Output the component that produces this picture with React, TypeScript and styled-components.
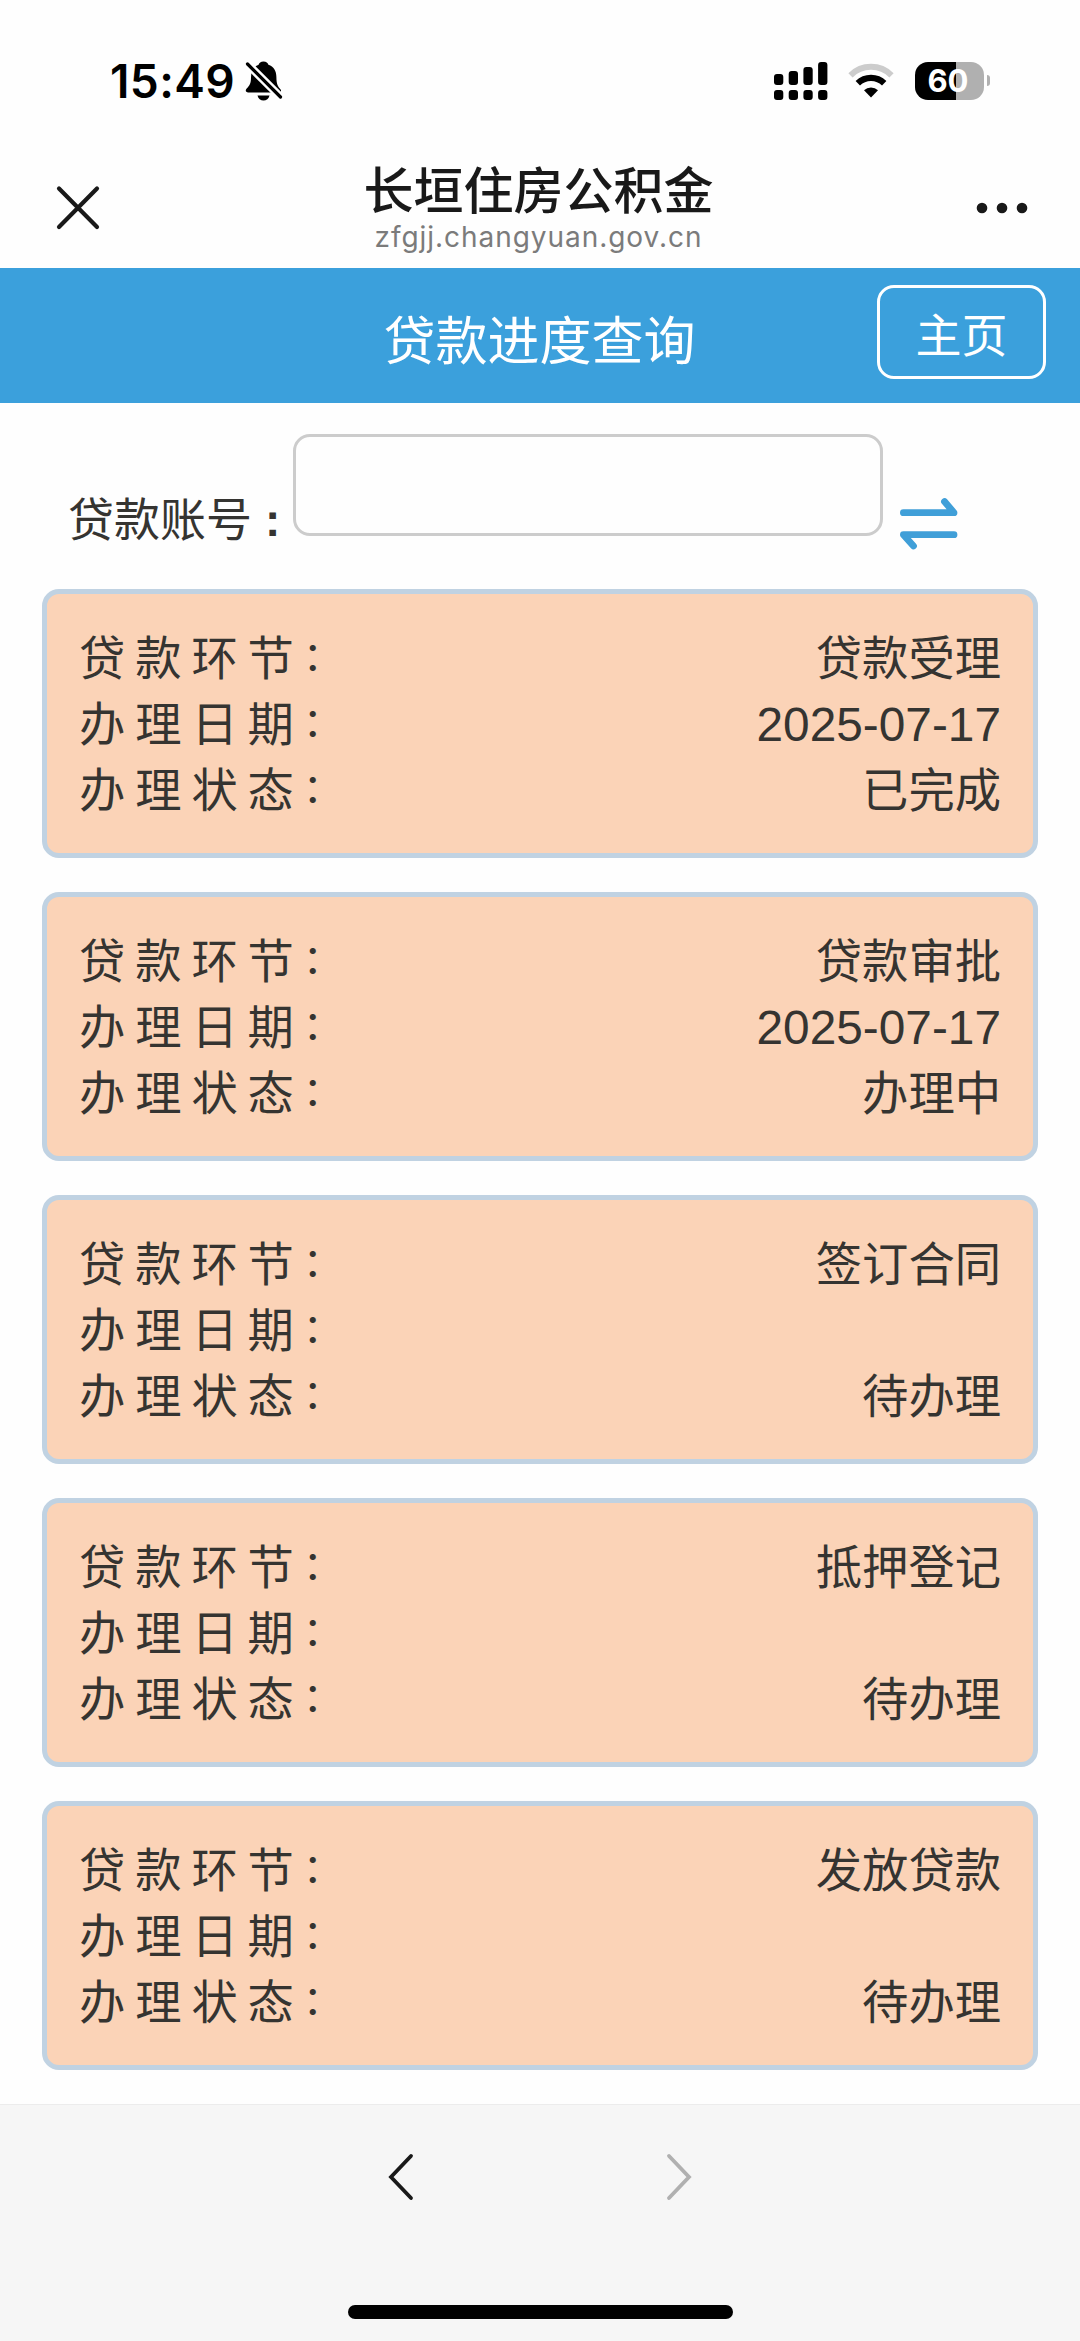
import React from "react";
import styled, { createGlobalStyle } from "styled-components";

const GlobalStyle = createGlobalStyle`
  *, *::before, *::after { box-sizing: border-box; }
  body { margin: 0; background: #fefefe; }
`;

const cjk = `"Liberation Sans", "Noto Sans CJK SC", sans-serif`;
const system = `Inter, "Noto Sans CJK SC", sans-serif`;

const Screen = styled.div`
  display: flex;
  flex-direction: column;
  width: 1080px;
  height: 2341px;
  overflow: hidden;
  background: #fefefe;
  color: #353431;
  font-family: ${cjk};
`;

const StatusBar = styled.div`
  display: flex;
  align-items: center;
  justify-content: space-between;
  height: 161px;
  padding: 0 90px 0 110px;
  color: #000;
`;

const StatusGroup = styled.div`
  display: flex;
  align-items: center;
`;

const Time = styled.span`
  width: 135px;
  font: 600 46px/60px ${system};
  letter-spacing: 0.4px;
  white-space: nowrap;
`;

const Battery = styled.div`
  display: flex;
  align-items: center;
  justify-content: center;
  width: 69px;
  height: 38px;
  margin: 0 3px 0 21px;
  padding-right: 3px;
  border-radius: 13px;
  background: linear-gradient(90deg, #000 41px, #b0b0b0 41px);
  color: #fff;
  font: 700 31px/38px ${system};
`;

const BatteryTip = styled.span`
  width: 3px;
  height: 11px;
  border-radius: 0 3px 3px 0;
  background: #b0b0b0;
`;

const BrowserBar = styled.header`
  display: flex;
  align-items: flex-start;
  justify-content: space-between;
  height: 107px;
  padding: 0 51px 0 52px;
`;

const IconButton = styled.button`
  display: flex;
  margin: 0;
  padding: 20px 0 0;
  border: 0;
  background: none;
`;

const PageInfo = styled.div`
  display: flex;
  flex-direction: column;
  align-items: center;
`;

const PageTitle = styled.div`
  height: 60px;
  padding-top: 1px;
  font: 500 50px/60px ${cjk};
  color: #191919;
`;

const PageUrl = styled.div`
  font: 400 28px/32px ${system};
  letter-spacing: 0.95px;
  color: #7b7b7b;
`;

const AppBar = styled.div`
  display: grid;
  grid-template-columns: 1fr auto 1fr;
  height: 135px;
  padding: 17px 34px 0 0;
  background: #3ba0dc;
  color: #fff;
`;

const AppTitle = styled.h1`
  grid-column: 2;
  margin: 0 0 0 33px;
  padding-top: 21px;
  font: 400 52px/72px ${cjk};
`;

const HomeButton = styled.button`
  justify-self: end;
  width: 169px;
  height: 94px;
  padding: 8px 0 0;
  border: 3px solid #fff;
  border-radius: 17px;
  background: transparent;
  color: #fff;
  font: 400 46px/80px ${cjk};
`;

const SearchRow = styled.div`
  display: flex;
  height: 186px;
  padding: 31px 0 0 68px;
`;

const SearchLabel = styled.label`
  width: 225px;
  padding-top: 54px;
  font-size: 46px;
  line-height: 64px;
  white-space: nowrap;
`;

const LabelColon = styled.b`
  margin-left: 13px;
`;

const AccountInput = styled.input`
  width: 590px;
  height: 102px;
  margin: 0;
  padding: 0 20px;
  border: 3px solid #ccc;
  border-radius: 17px;
  background: #fefefe;
  font: 400 46px/60px ${cjk};
  outline: none;
`;

const SwapButton = styled(IconButton)`
  padding: 62px 0 0 16px;
  align-self: flex-start;
`;

const CardList = styled.main`
  display: flex;
  flex: 1;
  flex-direction: column;
  gap: 34.1px;
  padding: 0 42px;
`;

const Card = styled.section`
  height: 269px;
  padding: 32px 32px 29px;
  border: 5px solid #c0d2e2;
  border-radius: 17px;
  background: #fbd3b7;
`;

const Field = styled.div`
  display: flex;
  justify-content: space-between;
  height: 66px;
  font-size: 46.3px;
  line-height: 66px;
`;

const FieldName = styled.span`
  letter-spacing: 9.9px;
`;

const FieldColon = styled.span`
  margin-left: -1px;
  font-size: 40px;
  line-height: 1;
  vertical-align: 5px;
`;

const FieldValue = styled.span<{ $date?: boolean }>`
  font-size: ${(p) => (p.$date ? 47.8 : 46.3)}px;
`;

const Footer = styled.footer`
  display: flex;
  flex-direction: column;
  align-items: center;
  justify-content: space-between;
  height: 237px;
  padding: 47px 0 22px;
  border-top: 1px solid #ececec;
  background: #f6f6f6;
`;

const NavButtons = styled.nav`
  display: flex;
  gap: 250px;

  button { padding: 0; }
`;

const HomeIndicator = styled.div`
  width: 385px;
  height: 14px;
  border-radius: 7px;
  background: #000;
`;

const BellOff = () => (
  <svg width="38" height="42" viewBox="0 0 38 42">
    <path
      d="M18.5 1.5c2.8 0 4.4 1.5 4.9 3.3 5.3 1.8 8 6.2 8 12.4 0 6.8 1.4 9.3 4.2 12.2.8.8.8 3-1.6 3H3.300c-3 0-3.100-2.400-1.600-3.900 3-3 4.300-5.300 4.300-11.300 0-6.200 2.700-10.600 7.600-12.400.5-1.800 2.100-3.300 4.900-3.300z"
      fill="#000"
    />
    <path d="M12.5 35.5h12c-.8 3.200-3 5-6 5s-5.200-1.800-6-5z" fill="#000" />
    <path d="M3 4.500l33 33" stroke="#fff" strokeWidth="8" />
    <path d="M2.500 4l33 33" stroke="#000" strokeWidth="3.200" strokeLinecap="round" />
  </svg>
);

const Signal = () => (
  <svg width="54" height="38" viewBox="0 0 54 38">
    {[12, 9, 5, 0].map((top, i) => (
      <React.Fragment key={top}>
        <rect x={i * 14.7} y={top} width="9.3" height={23 - top} rx="3" />
        <rect x={i * 14.7} y="28" width="9.3" height="10" rx="3" />
      </React.Fragment>
    ))}
  </svg>
);

const WifiSvg = styled.svg`
  margin-left: 20px;
`;

const Wifi = () => (
  <WifiSvg width="46" height="35" viewBox="0 0 46 35" fill="none">
    <path d="M2.500 12.300a29 29 0 0 1 41 0" stroke="#ccc" strokeWidth="6" />
    <path d="M9.800 20.300a18.700 18.700 0 0 1 26.400 0" stroke="#000" strokeWidth="6.200" />
    <path d="M23 34.500l-7-7.200a10 10 0 0 1 14 0z" fill="#000" />
  </WifiSvg>
);

const CloseIcon = () => (
  <svg width="52" height="52" viewBox="0 0 52 52">
    <path d="M7 7.500l38 38.500M45 7.500L7 46" stroke="#191919" strokeWidth="4.200" strokeLinecap="round" />
  </svg>
);

const MoreIcon = () => (
  <svg width="56" height="52" viewBox="0 0 56 52" fill="#191919">
    <circle cx="9" cy="27" r="5.300" />
    <circle cx="29" cy="27" r="5.300" />
    <circle cx="49" cy="27" r="5.300" />
  </svg>
);

const SwapIcon = () => (
  <svg width="60" height="54" viewBox="0 0 60 54" fill="none" stroke="#409fd8" strokeWidth="6.800" strokeLinecap="round" strokeLinejoin="round">
    <path d="M4.400 16.700H55L45.500 5.500" />
    <path d="M55 38.700H4.400L14.500 50" />
  </svg>
);

const Chevron = ({ forward = false }: { forward?: boolean }) => (
  <svg width="28" height="50" viewBox="0 0 28 50" fill="none" stroke={forward ? "#b0b0b0" : "#191919"} strokeWidth="3.800" strokeLinecap="round">
    <path d={forward ? "M4 4l20 21L4 46" : "M24 4L4 25l20 21"} />
  </svg>
);

const steps = [
  { stage: "贷款受理", date: "2025-07-17", state: "已完成" },
  { stage: "贷款审批", date: "2025-07-17", state: "办理中" },
  { stage: "签订合同", date: "", state: "待办理" },
  { stage: "抵押登记", date: "", state: "待办理" },
  { stage: "发放贷款", date: "", state: "待办理" },
];

const Row = ({ name, value, date }: { name: string; value: string; date?: boolean }) => (
  <Field>
    <FieldName>{name}<FieldColon>：</FieldColon></FieldName>
    <FieldValue $date={date}>{value}</FieldValue>
  </Field>
);

export default function App() {
  return (
    <Screen>
      <GlobalStyle />
      <StatusBar>
        <StatusGroup>
          <Time>15:49</Time>
          <BellOff />
        </StatusGroup>
        <StatusGroup>
          <Signal />
          <Wifi />
          <Battery>60</Battery>
          <BatteryTip />
        </StatusGroup>
      </StatusBar>
      <BrowserBar>
        <IconButton aria-label="关闭"><CloseIcon /></IconButton>
        <PageInfo>
          <PageTitle>长垣住房公积金</PageTitle>
          <PageUrl>zfgjj.changyuan.gov.cn</PageUrl>
        </PageInfo>
        <IconButton aria-label="更多"><MoreIcon /></IconButton>
      </BrowserBar>
      <AppBar>
        <AppTitle>贷款进度查询</AppTitle>
        <HomeButton>主页</HomeButton>
      </AppBar>
      <SearchRow>
        <SearchLabel htmlFor="account">
          贷款账号<LabelColon>:</LabelColon>
        </SearchLabel>
        <AccountInput id="account" />
        <SwapButton aria-label="切换"><SwapIcon /></SwapButton>
      </SearchRow>
      <CardList>
        {steps.map((s) => (
          <Card key={s.stage}>
            <Row name="贷款环节" value={s.stage} />
            <Row name="办理日期" value={s.date} date />
            <Row name="办理状态" value={s.state} />
          </Card>
        ))}
      </CardList>
      <Footer>
        <NavButtons>
          <IconButton aria-label="后退"><Chevron /></IconButton>
          <IconButton aria-label="前进"><Chevron forward /></IconButton>
        </NavButtons>
        <HomeIndicator />
      </Footer>
    </Screen>
  );
}
